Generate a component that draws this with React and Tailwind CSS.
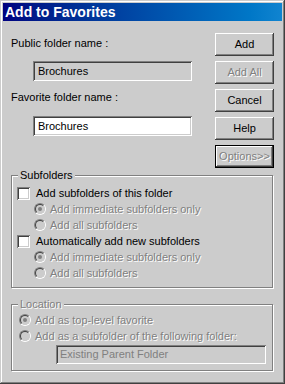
import React from "react";

const FACE = "bg-[#cccccc]";
const raised =
  "shadow-[inset_-1px_-1px_#404040,inset_1px_1px_#ffffff,inset_-2px_-2px_#808080,inset_2px_2px_#cccccc]";
const sunken =
  "shadow-[inset_1px_1px_#808080,inset_-1px_-1px_#ffffff,inset_2px_2px_#404040,inset_-2px_-2px_#cccccc]";
const disabledText = "text-[#808080] [text-shadow:1px_1px_0_#ffffff]";

function Button({ children, disabled, isDefault }) {
  const inner = (
    <div
      className={`h-full w-full flex items-center justify-center ${raised} ${
        disabled ? disabledText : "text-black"
      }`}
    >
      {children}
    </div>
  );
  if (isDefault) {
    return <div className="h-[23px] w-full border border-black">{inner}</div>;
  }
  return <div className="h-[23px] w-full">{inner}</div>;
}

function Checkbox() {
  return <span className={`block w-[13px] h-[13px] shrink-0 bg-white ${sunken}`} />;
}

function Radio({ checked }) {
  return (
    <span className="flex w-[12px] h-[12px] shrink-0 rounded-full border border-t-[#808080] border-l-[#808080] border-b-white border-r-white">
      <span className="flex flex-1 items-center justify-center rounded-full border border-t-[#404040] border-l-[#404040] border-b-[#cccccc] border-r-[#cccccc] bg-[#cccccc]">
        {checked && <span className="block w-[4px] h-[4px] rounded-full bg-[#808080]" />}
      </span>
    </span>
  );
}

function CheckRow({ label }) {
  return (
    <div className="h-[16px] flex items-center pl-[5px] gap-[6px]">
      <Checkbox />
      <span>{label}</span>
    </div>
  );
}

function RadioRow({ label, checked, indent }) {
  return (
    <div className={`h-[16px] flex items-center gap-[4px] ${indent}`}>
      <Radio checked={checked} />
      <span className={disabledText}>{label}</span>
    </div>
  );
}

function Group({ label, labelDisabled, children, className }) {
  return (
    <div
      className={`relative border border-[#808080] shadow-[inset_1px_1px_0_#ffffff,1px_1px_0_#ffffff] ${className}`}
    >
      <span
        className={`absolute left-[6px] top-[-7px] px-[2px] ${FACE} leading-[13px] ${
          labelDisabled ? disabledText : "text-black"
        }`}
      >
        {label}
      </span>
      {children}
    </div>
  );
}

export default function App() {
  return (
    <div
      className={`w-[285px] h-[384px] ${FACE} p-[3px] shadow-[inset_-1px_-1px_#404040,inset_1px_1px_#cccccc,inset_-2px_-2px_#808080,inset_2px_2px_#ffffff] font-['Liberation_Sans',Arial,sans-serif] text-[11px] leading-[13px] text-black overflow-hidden`}
    >
      <div className="h-[18px] bg-gradient-to-r from-[#000080] to-[#1084d0] text-white font-bold text-[14px] leading-[16px] pl-[2px] flex items-center">
        Add to Favorites
      </div>

      <div className="flex pt-[12px] pl-[8px] pr-[8px]">
        <div className="flex-1 flex flex-col">
          <div className="mt-[4px]">Public folder name :</div>
          <div
            className={`mt-[11px] ml-[22px] w-[159px] h-[20px] ${sunken} ${FACE} flex items-center pl-[5px]`}
          >
            Brochures
          </div>
          <div className="mt-[10px]">Favorite folder name :</div>
          <div
            className={`mt-[12px] ml-[22px] w-[159px] h-[20px] ${sunken} bg-white flex items-center pl-[5px]`}
          >
            Brochures
          </div>
        </div>
        <div className="w-[59px] flex flex-col gap-[5px]">
          <Button>Add</Button>
          <Button disabled>Add All</Button>
          <Button>Cancel</Button>
          <Button>Help</Button>
          <Button disabled isDefault>
            Options&gt;&gt;
          </Button>
        </div>
      </div>

      <div className="mx-[8px] mr-[9px] mt-[7px]">
        <Group label="Subfolders" className="pt-[9px] pb-[6px]">
          <CheckRow label="Add subfolders of this folder" />
          <RadioRow label="Add immediate subfolders only" checked indent="pl-[22px]" />
          <RadioRow label="Add all subfolders" indent="pl-[22px]" />
          <CheckRow label="Automatically add new subfolders" />
          <RadioRow label="Add immediate subfolders only" checked indent="pl-[22px]" />
          <RadioRow label="Add all subfolders" indent="pl-[22px]" />
        </Group>

        <Group label="Location" labelDisabled className="mt-[16px] pt-[7px] pb-[6px]">
          <RadioRow label="Add as top-level favorite" checked indent="pl-[7px]" />
          <RadioRow label="Add as a subfolder of the following folder:" indent="pl-[7px]" />
          <div
            className={`mt-[1px] ml-[44px] w-[210px] h-[19px] ${sunken} ${FACE} flex items-center pl-[4px] text-[#808080]`}
          >
            Existing Parent Folder
          </div>
        </Group>
      </div>
    </div>
  );
}
